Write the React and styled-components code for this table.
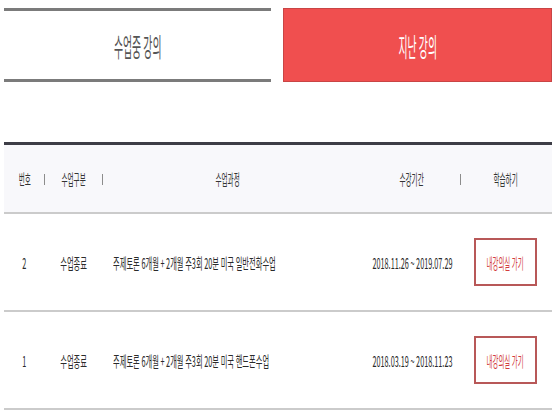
import React from 'react';
import styled, { createGlobalStyle } from 'styled-components';

const lectures = [
  {
    id: 2,
    status: '수업종료',
    title: '주제토론 6개월 + 2개월 주3회 20분 미국 일반전화수업',
    period: '2018.11.26 ~ 2019.07.29',
  },
  {
    id: 1,
    status: '수업종료',
    title: '주제토론 6개월 + 2개월 주3회 20분 미국 핸드폰수업',
    period: '2018.03.19 ~ 2018.11.23',
  },
];

function App() {
  return (
    <>
      <GlobalStyle />
      <Page>
        <Tabs>
          <Tab>
            <TabLabel>수업중 강의</TabLabel>
          </Tab>
          <Tab active>
            <TabLabel>지난 강의</TabLabel>
          </Tab>
        </Tabs>

        <Table>
          <HeaderRow>
            <HeadCell sep>
              <Narrow scale={0.44}>번호</Narrow>
            </HeadCell>
            <HeadCell sep>
              <Narrow scale={0.44}>수업구분</Narrow>
            </HeadCell>
            <HeadCell>
              <Narrow scale={0.44}>수업과정</Narrow>
            </HeadCell>
            <HeadCell sep sepRight={10}>
              <Narrow scale={0.44}>수강기간</Narrow>
            </HeadCell>
            <HeadCell shift={-6}>
              <Narrow scale={0.44}>학습하기</Narrow>
            </HeadCell>
          </HeaderRow>

          {lectures.map((item) => (
            <Row key={item.id}>
              <Cell>
                <Narrow>{item.id}</Narrow>
              </Cell>
              <Cell>
                <Narrow>{item.status}</Narrow>
              </Cell>
              <Cell align="left">
                <Narrow origin="left">{item.title}</Narrow>
              </Cell>
              <Cell>
                <Narrow>{item.period}</Narrow>
              </Cell>
              <Cell align="left">
                <GoButton type="button">
                  <Narrow scale={0.43}>내강의실 가기</Narrow>
                </GoButton>
              </Cell>
            </Row>
          ))}
        </Table>
      </Page>
    </>
  );
}

export default App;

const GlobalStyle = createGlobalStyle`
  body {
    margin: 0;
    background: #fff;
    font-family: "Noto Sans CJK KR", "Noto Sans", sans-serif;
    color: #333;
  }
`;

const Page = styled.div`
  width: 556px;
  padding: 8px 4px 0;
  box-sizing: border-box;
`;

const Tabs = styled.div`
  display: grid;
  grid-template-columns: 267px 269px;
  gap: 12px;
  height: 74px;
`;

const Tab = styled.div`
  display: flex;
  align-items: center;
  justify-content: center;
  box-sizing: border-box;
  overflow: hidden;
  background: ${(p) => (p.active ? '#f04f4f' : '#fff')};
  color: ${(p) => (p.active ? '#fff' : '#555')};
  border: ${(p) => (p.active ? '1px solid #c94545' : 'none')};
  border-top: ${(p) => (p.active ? '1px solid #c94545' : '3px solid #7b7b7b')};
  border-bottom: ${(p) =>
    p.active ? '1px solid #c94545' : '3px solid #7b7b7b'};
`;

const TabLabel = styled.span`
  display: inline-block;
  font-size: 26px;
  white-space: nowrap;
  transform: scaleX(0.38);
`;

const Table = styled.div`
  margin-top: 60px;
  border-top: 3px solid #3d3d46;
`;

const HeaderRow = styled.div`
  display: grid;
  grid-template-columns: 41px 58px 250px 118px 81px;
  height: 67px;
  align-items: center;
  background: #f8f8fb;
  border-bottom: 2px solid #cbcbcb;
  font-size: 15px;
  color: #333;
`;

const HeadCell = styled.div`
  position: relative;
  display: flex;
  justify-content: center;
  margin-left: ${(p) => (p.shift ? `${p.shift * 2}px` : '0')};
  white-space: nowrap;

  &::after {
    content: '';
    display: ${(p) => (p.sep ? 'block' : 'none')};
    position: absolute;
    top: 50%;
    right: ${(p) => (p.sepRight ? `${p.sepRight}px` : '0')};
    width: 1px;
    height: 11px;
    margin-top: -5px;
    background: #8c8c8c;
  }
`;

const Row = styled.div`
  display: grid;
  grid-template-columns: 41px 58px 250px 118px 81px;
  height: 96px;
  align-items: center;
  border-bottom: 2px solid #cbcbcb;
  font-size: 15px;
  color: #2a2a2a;
`;

const Cell = styled.div`
  display: flex;
  justify-content: ${(p) => (p.align === 'left' ? 'flex-start' : 'center')};
  padding-left: ${(p) => (p.align === 'left' ? '10px' : '0')};
  white-space: nowrap;
  overflow: visible;
`;

const Narrow = styled.span`
  display: inline-block;
  white-space: nowrap;
  transform: scaleX(${(p) => p.scale || 0.485});
  transform-origin: ${(p) => (p.origin === 'left' ? 'left center' : 'center')};
`;

const GoButton = styled.button`
  display: flex;
  align-items: center;
  justify-content: center;
  width: 63px;
  height: 48px;
  margin-left: -7px;
  padding: 0;
  background: #fff;
  border: 2px solid #b85858;
  border-radius: 0;
  color: #d23c3c;
  font-family: "Noto Sans CJK KR", sans-serif;
  font-size: 15px;
  overflow: hidden;
  cursor: pointer;
`;
